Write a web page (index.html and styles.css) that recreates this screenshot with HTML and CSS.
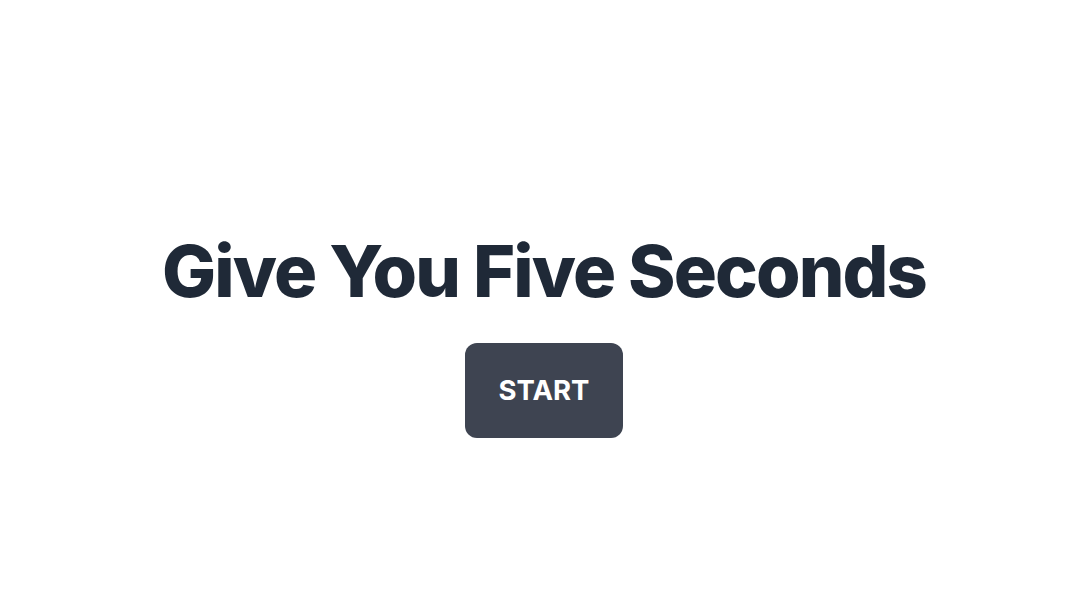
FILE: index.html
```html
<!DOCTYPE html>
<html>
<head>
<meta charset="utf-8">
<link rel="stylesheet" href="styles.css">
</head>
<body>
<main class="screen">
  <h1 class="title">Give You Five Seconds</h1>
  <button class="start-btn">START</button>
</main>
</body>
</html>
```
FILE: styles.css
```css
html, body {
  margin: 0;
  padding: 0;
  background: #ffffff;
}
body {
  font-family: Inter, "Noto Sans", sans-serif;
}
.screen {
  box-sizing: border-box;
  min-height: 616px;
  padding-top: 57px;
  display: flex;
  flex-direction: column;
  align-items: center;
  justify-content: center;
  gap: 36px;
}
.title {
  margin: 0;
  font-size: 72px;
  line-height: 1;
  font-weight: 800;
  color: #1f2937;
  letter-spacing: -1.9px;
}
.start-btn {
  font-family: Inter, "Noto Sans", sans-serif;
  font-size: 27.5px;
  font-weight: 700;
  color: #ffffff;
  background: #3e4451;
  border: none;
  border-radius: 12px;
  padding: 32px 34px;
  line-height: 31px;
}
```
